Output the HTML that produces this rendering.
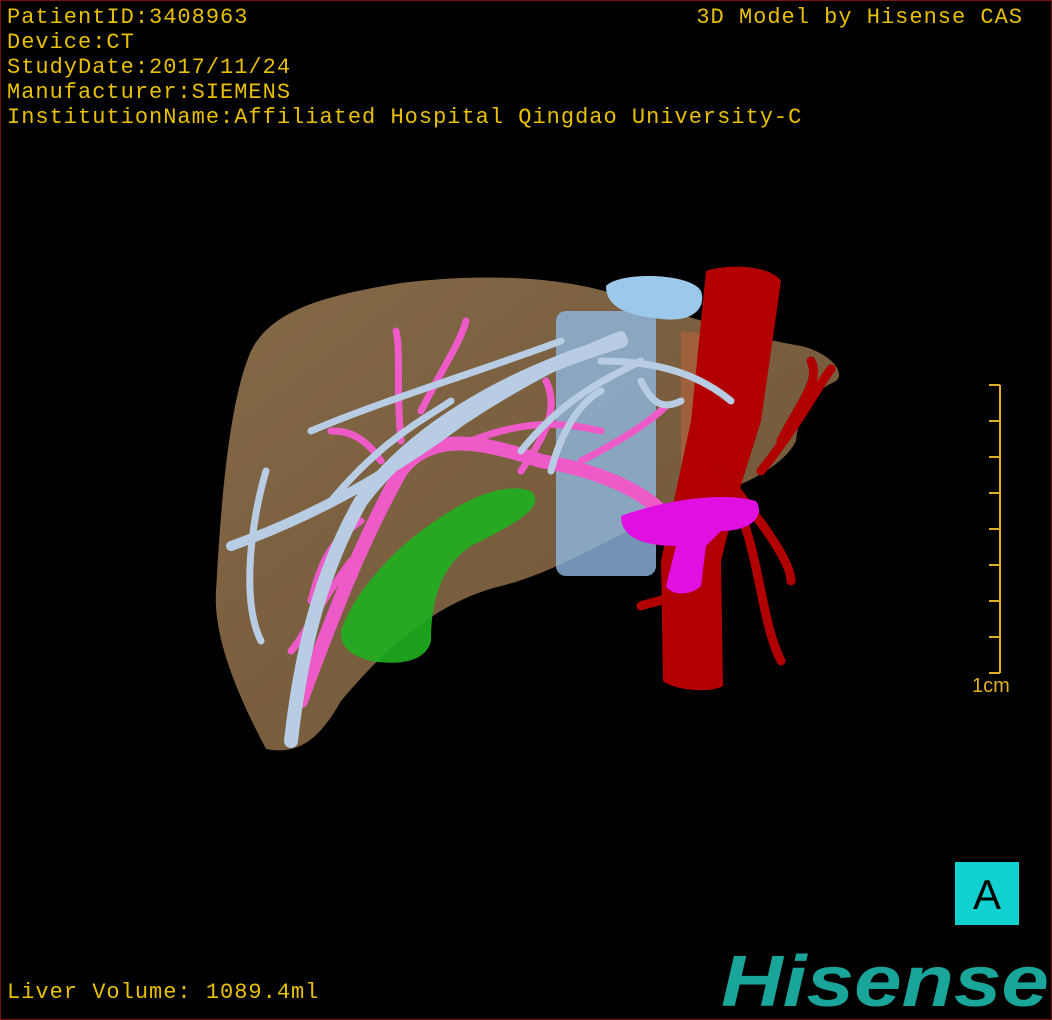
<!DOCTYPE html>
<html><head><meta charset="utf-8"><style>
html,body{margin:0;padding:0;background:#000;}
.wrap{position:relative;width:1050px;height:1018px;border:1px solid #7a1010;overflow:hidden;background:#000;}
.t{position:absolute;color:#e8c000;font-family:"Liberation Mono",monospace;font-size:22px;letter-spacing:1px;line-height:25px;white-space:pre;}
</style></head><body><div class="wrap">
<svg width="1050" height="1018" style="position:absolute;left:0;top:0">
<defs>
<linearGradient id="lv" x1="0" y1="0" x2="1" y2="1"><stop offset="0" stop-color="#93754f"/><stop offset="1" stop-color="#7a5c3c"/></linearGradient>
</defs>
<path d="M265,748 C240,700 212,640 215,590 C220,500 228,400 250,350 C270,310 320,295 400,282 C480,272 560,275 620,295 C680,312 740,335 800,345 C830,352 845,372 835,380 C815,390 800,400 795,440 C780,470 730,490 680,505 C620,530 560,570 500,585 C440,600 390,640 340,700 C320,735 300,755 265,748 Z" fill="url(#lv)" opacity="0.9"/>
<rect x="555" y="310" width="100" height="265" rx="10" fill="#8fb8e0" opacity="0.8"/>
<path d="M605,285 C620,270 690,272 700,290 C705,305 695,322 660,318 C630,315 605,308 605,285Z" fill="#9cc8ec"/>
<path d="M680,330 L760,340 L740,470 L680,500 Z" fill="#c0603a" opacity="0.55"/>
<path d="M705,270 C730,262 770,265 780,280 L760,420 L735,500 L720,560 L722,685 C710,692 675,690 662,680 L660,560 L690,420 Z" fill="#b20000"/>
<path d="M720,470 C760,520 790,560 790,580 M735,500 C760,560 760,620 780,660 M700,560 C690,600 650,600 640,605 M760,470 C800,420 820,380 830,368 M780,440 C800,400 820,380 810,360" stroke="#b00000" stroke-width="9" fill="none" stroke-linecap="round"/>
<path d="M340,630 C350,600 380,560 420,530 C460,500 500,480 530,490 C545,505 520,520 470,545 C440,565 430,600 430,640 C425,660 400,665 370,660 C350,655 338,645 340,630Z" fill="#1fb01f" opacity="0.9"/>
<path d="M300,700 C330,620 360,540 400,470 C430,430 480,440 540,460 C600,470 640,490 660,510" stroke="#ee5ac8" stroke-width="14" fill="none" stroke-linecap="round"/>
<path d="M400,440 C395,390 400,350 395,330 M420,410 C440,370 460,340 465,320 M470,440 C520,420 560,420 600,430 M520,470 C540,440 560,410 545,380 M580,460 C620,440 650,420 665,405 M360,520 C330,540 320,560 310,600 M380,460 C360,430 340,430 330,430 M350,560 C320,600 300,640 290,650" stroke="#ee5ac8" stroke-width="7" fill="none" stroke-linecap="round"/>
<path d="M620,515 C660,500 720,490 755,500 C765,515 750,530 720,530 L705,545 L700,585 C690,595 670,595 665,585 L675,545 C650,545 620,540 620,515Z" fill="#e010e0"/>
<g stroke="#b8cce4" fill="none" stroke-linecap="round">
<path d="M290,740 C300,650 320,570 360,500 C420,420 520,370 620,340" stroke-width="14"/>
<path d="M230,545 C300,520 380,480 460,420 C520,380 580,350 620,335" stroke-width="10"/>
<path d="M310,430 C380,400 480,370 560,340 M330,500 C380,440 420,420 450,400 M520,450 C560,400 600,380 640,360 M600,360 C660,360 700,375 730,400 M265,470 C250,520 240,600 260,640 M550,470 C560,430 580,400 600,390 M640,380 C650,400 660,410 680,400" stroke-width="7"/>
</g>
<g stroke="#e0b020" stroke-width="2" fill="none">
<path d="M999,384 V672 M988,384 H999 M988,420 H999 M988,456 H999 M988,492 H999 M988,528 H999 M988,564 H999 M988,600 H999 M988,636 H999 M988,672 H999"/>
</g>
<text x="971" y="691" font-family="Liberation Sans,sans-serif" font-size="20" fill="#e0b020">1cm</text>
<rect x="954" y="861" width="64" height="63" fill="#10d0d0"/>
<text x="986" y="908" text-anchor="middle" font-family="Liberation Sans,sans-serif" font-size="42" fill="#000">A</text>
<text x="720" y="1005" textLength="328" lengthAdjust="spacingAndGlyphs" font-family="Liberation Sans,sans-serif" font-weight="bold" font-style="italic" font-size="72" fill="#1aa59a">Hisense</text>
</svg>
<div class="t" style="left:6px;top:4px">PatientID:3408963
Device:CT
StudyDate:2017/11/24
Manufacturer:SIEMENS
InstitutionName:Affiliated Hospital Qingdao University-C</div>
<div class="t" style="right:28px;top:4px">3D Model by Hisense CAS</div>
<div class="t" style="left:6px;top:979px">Liver Volume: 1089.4ml</div>
</div></body></html>
